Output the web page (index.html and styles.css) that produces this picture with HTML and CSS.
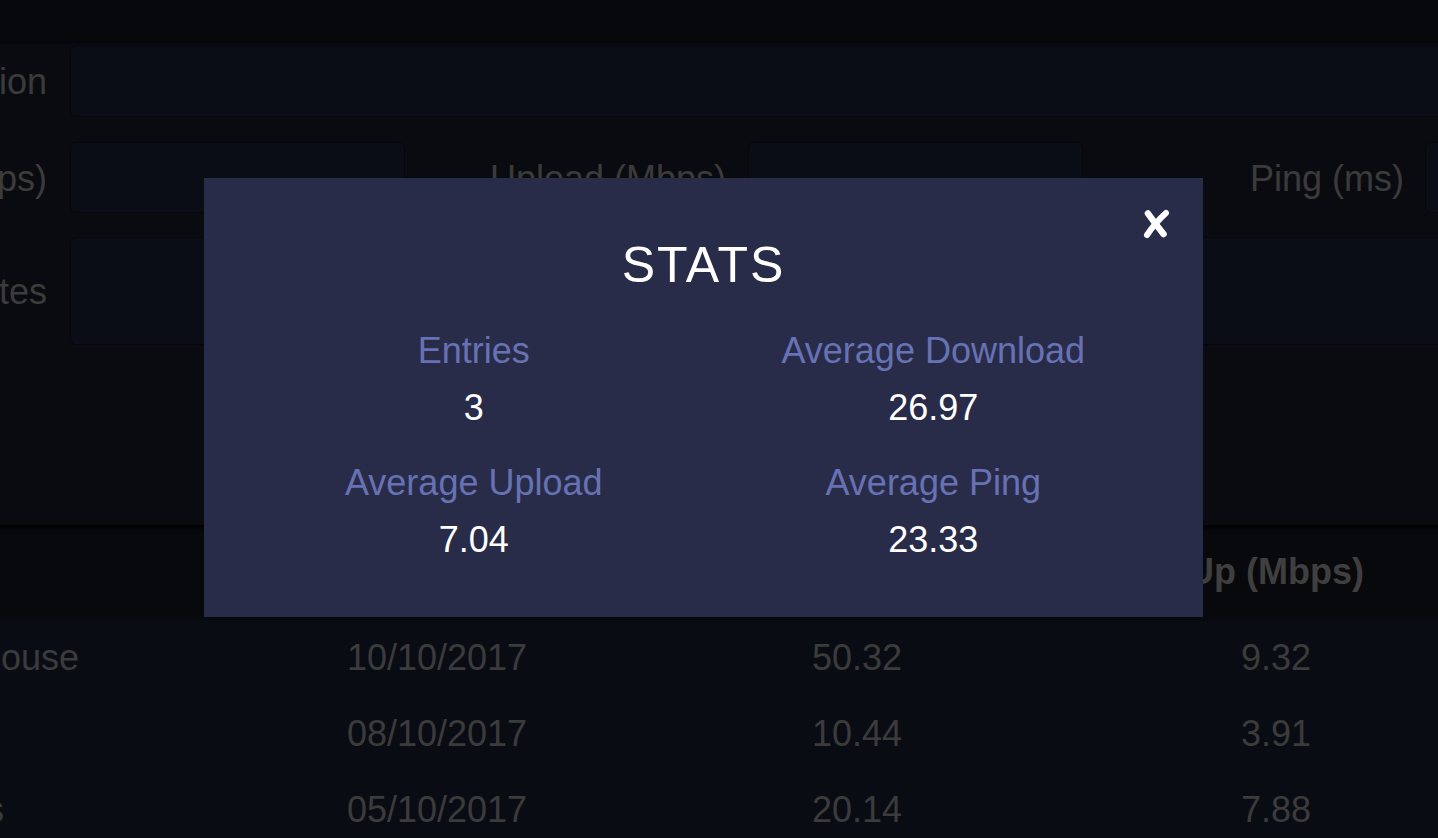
FILE: index.html
```html
<!DOCTYPE html>
<html lang="en">
<head>
<meta charset="utf-8">
<title>Speed log – Stats</title>
<link rel="stylesheet" href="styles.css">
</head>
<body>
<div class="topbar"></div>
<div class="page">
  <section class="entry-form">
    <div class="row row-single">
      <label class="lbl lbl-first" for="loc">Location</label>
      <input class="field field-wide" id="loc" type="text">
    </div>
    <div class="row row-triple">
      <label class="lbl lbl-first" for="down">Download (Mbps)</label>
      <input class="field field-num" id="down" type="text">
      <label class="lbl lbl-mid" for="up">Upload (Mbps)</label>
      <input class="field field-num" id="up" type="text">
      <label class="lbl lbl-mid lbl-last" for="ping">Ping (ms)</label>
      <input class="field field-num" id="ping" type="text">
    </div>
    <div class="row row-notes">
      <label class="lbl lbl-first" for="notes">Notes</label>
      <textarea class="field field-wide field-tall" id="notes"></textarea>
    </div>
  </section>

  <section class="log">
    <div class="log-row log-head">
      <div class="cell cell-name">Name</div>
      <div class="cell">Date</div>
      <div class="cell">Down (Mbps)</div>
      <div class="cell">Up (Mbps)</div>
      <div class="cell">Ping (ms)</div>
    </div>
    <div class="log-row">
      <div class="cell cell-name">Nan's house</div>
      <div class="cell">10/10/2017</div>
      <div class="cell">50.32</div>
      <div class="cell">9.32</div>
      <div class="cell">20</div>
    </div>
    <div class="log-row">
      <div class="cell cell-name">Work</div>
      <div class="cell">08/10/2017</div>
      <div class="cell">10.44</div>
      <div class="cell">3.91</div>
      <div class="cell">25</div>
    </div>
    <div class="log-row">
      <div class="cell cell-name">Parents</div>
      <div class="cell">05/10/2017</div>
      <div class="cell">20.14</div>
      <div class="cell">7.88</div>
      <div class="cell">25</div>
    </div>
  </section>
</div>

<div class="modal" role="dialog" aria-label="Stats">
  <button class="close" type="button" aria-label="Close">
    <svg width="28" height="30" viewBox="0 0 28 30" aria-hidden="true">
      <path d="M6 4.5 Q12 13 21.5 25" stroke="#fff" stroke-width="6.5" stroke-linecap="round" fill="none"/>
      <path d="M24 4 Q13 14 5 26" stroke="#fff" stroke-width="6" stroke-linecap="round" fill="none"/>
    </svg>
  </button>
  <h2 class="modal-title">STATS</h2>
  <div class="stats">
    <div class="stat">
      <div class="stat-label">Entries</div>
      <div class="stat-value">3</div>
    </div>
    <div class="stat">
      <div class="stat-label">Average Download</div>
      <div class="stat-value">26.97</div>
    </div>
    <div class="stat">
      <div class="stat-label">Average Upload</div>
      <div class="stat-value">7.04</div>
    </div>
    <div class="stat">
      <div class="stat-label">Average Ping</div>
      <div class="stat-value">23.33</div>
    </div>
  </div>
</div>
</body>
</html>
```

FILE: styles.css
```css
html, body {
  margin: 0;
  padding: 0;
}

body {
  width: 1438px;
  height: 838px;
  overflow: hidden;
  position: relative;
  background: #0a0c14;
  font-family: "Liberation Sans", Arial, sans-serif;
  font-size: 36px;
  color: #3b3b3b;
}

.topbar {
  height: 44px;
  background: #07080c;
}

.page {
  width: 2100px;
  margin-left: -250px;
}

/* ---------- form ---------- */
.entry-form {
  position: relative;
  z-index: 1;
  background: #0a0b10;
  padding: 1px 0 180px;
  box-shadow: 0 3px 5px rgba(0, 0, 0, 0.85);
}

.row {
  display: flex;
  align-items: center;
}

.row-single {
  height: 72px;
  margin-bottom: 25px;
}

.row-triple {
  height: 71px;
  margin-bottom: 24px;
}

.row-notes {
  height: 108px;
}

.lbl {
  flex: none;
  text-align: right;
  line-height: 40px;
  padding-top: 2px;
  white-space: nowrap;
  color: #3b3b3b;
}

.lbl-first {
  width: 297px;
  margin-right: 23px;
}

.lbl-mid {
  width: 321px;
  margin-right: 22px;
}

.lbl-last {
  margin-right: 21px;
}

.field {
  box-sizing: border-box;
  height: 100%;
  margin: 0;
  padding: 0 16px;
  border: 1px solid #06070b;
  border-radius: 6px;
  background: #0b0d16;
  color: #3b3b3b;
  font: inherit;
  outline: none;
  resize: none;
}

.field-num {
  flex: none;
  width: 335px;
}

.field-wide {
  flex: 1;
}

/* ---------- log table ---------- */
.log-row {
  display: grid;
  grid-template-columns: 476px 422px 418px 420px 420px;
}

.cell {
  text-align: center;
  line-height: 40px;
  padding: 18px 0 18px;
  white-space: nowrap;
}

.cell-name {
  text-align: left;
  padding-left: 130px;
}

.log-head {
  background: #08090d;
}

.log-head .cell {
  font-weight: bold;
  color: #3f3f3f;
  padding: 27px 0 28px;
}

.log-head .cell-name {
  padding-left: 130px;
}

/* ---------- modal ---------- */
.modal {
  position: absolute;
  z-index: 10;
  left: 204px;
  top: 178px;
  width: 999px;
  height: 439px;
  box-sizing: border-box;
  padding: 57px 40px 0;
  background: #292c49;
  text-align: center;
}

.close {
  position: absolute;
  top: 31px;
  right: 33px;
  width: 28px;
  height: 30px;
  padding: 0;
  border: 0;
  background: none;
  cursor: pointer;
}

.close svg {
  display: block;
}

.modal-title {
  margin: 0 0 36px;
  font-size: 50px;
  font-weight: normal;
  line-height: 60px;
  letter-spacing: 2px;
  color: #ffffff;
}

.stats {
  display: grid;
  grid-template-columns: 1fr 1fr;
  row-gap: 35px;
}

.stat-label {
  line-height: 40px;
  color: #6772b4;
}

.stat-value {
  margin-top: 17px;
  line-height: 40px;
  color: #ffffff;
}
```
